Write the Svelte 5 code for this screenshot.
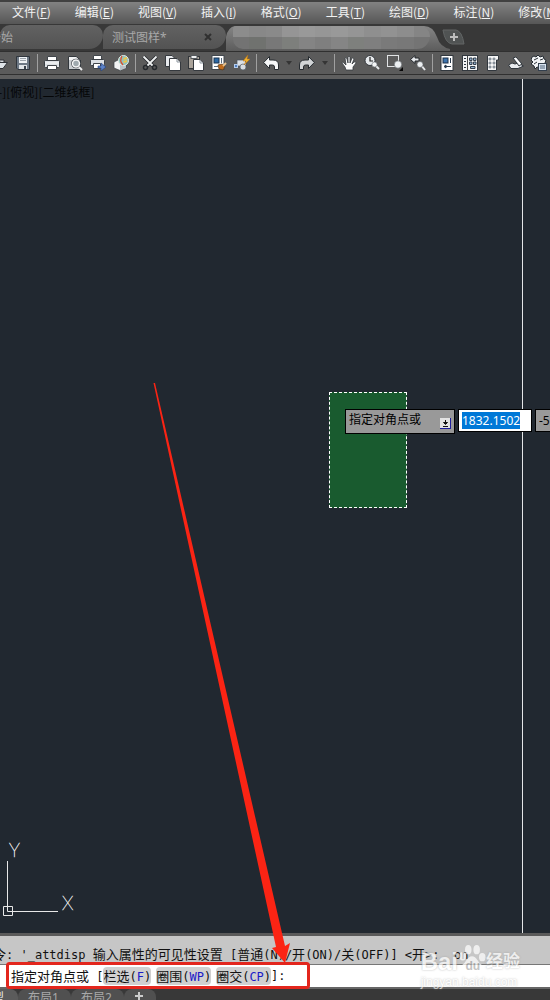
<script>
  import { onMount } from 'svelte';

  let menus = [
    ['文件', 'F'], ['编辑', 'E'], ['视图', 'V'], ['插入', 'I'], ['格式', 'O'],
    ['工具', 'T'], ['绘图', 'D'], ['标注', 'N'], ['修改', 'M']
  ];

  let tools = [
    'open', 'save', '|', 'print', 'preview', 'publish', 'globe', '|',
    'cut', 'copy', 'paste', 'match', 'block', '|',
    'undo', 'v', 'redo', 'v', '|',
    'pan', 'zoomrt', 'zoomwin', 'zoomprev', '|',
    'props', 'center', 'palette', 'sheet', 'markup'
  ];

  let historyText = "命令: '_attdisp 输入属性的可见性设置 [普通(N)/开(ON)/关(OFF)] <开>:  on";
  let options = [['栏选', 'F'], ['圈围', 'WP'], ['圈交', 'CP']];

  // mosaic strip over the active tab's file name, two rows of blocks
  let mosaic = [
    '#8c8c8c', '#888888', '#8a8a8a', '#959595', '#999999', '#969696', '#999999', '#959595', '#8f8f8f', '#929292', '#8d8d8d', '#858585',
    '#737373', '#70726f', '#787878', '#7d7f7c', '#848484', '#7f7f7f', '#858585', '#7e807d', '#7f7f7f', '#7a7a7a', '#787878', '#747474'
  ];

  let x = '1832.1502';
  let coord;

  // chinese runs get a slightly bigger font than the mono text
  function runs(text) {
    return text.split(/([\u4e00-\u9fa5]+)/).filter((s) => s);
  }
  function isHan(s) {
    return /[\u4e00-\u9fa5]/.test(s);
  }

  onMount(() => {
    coord.focus();
    coord.select();
  });
</script>

<div class="app">
  <nav class="menubar">
    {#each menus as [name, key]}
      <button>{name}(<u>{key}</u>)</button>
    {/each}
  </nav>

  <div class="tabs">
    <button class="tab first">开始</button>
    <div class="tab second">
      <button class="name">测试图样*</button>
      <button class="close" aria-label="关闭">
        <svg width="8" height="8" viewBox="0 0 8 8"><path d="M1 1L7 7M7 1L1 7" stroke="#303030" stroke-width="2" /></svg>
      </button>
    </div>
    <div class="tab active">
      <svg class="shape" width="224" height="26" viewBox="0 0 224 26">
        <defs>
          <linearGradient id="tabfill" x1="0" y1="0" x2="0" y2="1">
            <stop offset="0" stop-color="#858585" />
            <stop offset="1" stop-color="#5c5c5c" />
          </linearGradient>
        </defs>
        <path d="M0 26V12Q2 2 9 1H198Q207 1 211 12Q214 22 224 24V26Z" fill="url(#tabfill)" />
      </svg>
      <div class="mosaic">
        {#each mosaic as c}<i style="background: {c}"></i>{/each}
      </div>
    </div>
    <button class="add" aria-label="新建">
      <svg width="24" height="16" viewBox="0 0 24 16">
        <path d="M1 1H14Q20 2 22 15H10Q3 14 1 1Z" fill="#505353" stroke="#626565" />
        <path d="M12 4V12M8 8H16" stroke="#bdbdbd" stroke-width="2" />
      </svg>
    </button>
  </div>

  <div class="toolbar">
    {#each tools as t}
      {#if t === '|'}
        <span class="sep"></span>
      {:else if t === 'v'}
        <button class="drop" aria-label="more"><svg width="6" height="4" viewBox="0 0 6 4"><path d="M0 0H6L3 4Z" fill="#353535" /></svg></button>
      {:else}
        <button class="tool" aria-label={t}>
          <svg width="16" height="16" viewBox="0 0 16 16">
            {#if t === 'open'}
              <path d="M4 5H12V8" fill="#d6dade" stroke="#303338" />
              <path d="M4 7.500H15.500L11 13.500H1Z" fill="#dfe4e8" stroke="#303338" />
            {:else if t === 'save'}
              <path d="M1.500 1.500H14.500V14.500H3L1.500 13Z" fill="#6d7885" stroke="#30363d" />
              <rect x="4" y="2" width="8" height="6" fill="#eef1f4" />
              <path d="M5 3.500H11M5 5.500H11" stroke="#9aa2aa" />
              <rect x="4" y="10" width="8" height="4" fill="#dfe3e7" />
              <rect x="9" y="11" width="2" height="3" fill="#39424c" />
            {:else if t === 'print'}
              <path d="M3.500 1.500H12.500V6H3.500Z" fill="#fff" stroke="#41464b" />
              <rect x="0.500" y="5.500" width="15" height="7" rx="1" fill="#dde1e5" stroke="#3b4045" />
              <path d="M3.500 10.500H12.500V14.500H3.500Z" fill="#fff" stroke="#41464b" />
              <path d="M1 8H15" stroke="#f8f9fa" />
            {:else if t === 'preview'}
              <path d="M1.500 1.500H9L13.500 5V14.500H1.500Z" fill="#c9cdd0" stroke="#33383d" />
              <path d="M2 2H9L12 5H2Z" fill="#f3f4f5" />
              <circle cx="9" cy="8.500" r="4.800" fill="#33383d" />
              <circle cx="9" cy="8.500" r="3.500" fill="#9fa9ae" stroke="#f6f7f8" stroke-width="1.500" />
              <path d="M12 12L15 15" stroke="#eceeef" stroke-width="2" />
            {:else if t === 'publish'}
              <path d="M3.500 0.500H11.500V5H3.500Z" fill="#fff" stroke="#41464b" />
              <rect x="0.500" y="4.500" width="14" height="6" rx="1" fill="#dde1e5" stroke="#3b4045" />
              <path d="M3.500 8.500H10.500V13.500H3.500Z" fill="#fff" stroke="#41464b" />
              <path d="M8 11H11V8L16 12L11 16V13H8Z" fill="#5b82c8" stroke="#25407a" stroke-width="0.600" />
            {:else if t === 'globe'}
              <path d="M1 7L7 4L13 8V13L7 15.500L1 13Z" fill="#f2f4f5" stroke="#3b4045" stroke-width="0.700" />
              <path d="M7 10L13 8V13L7 15.500Z" fill="#b9c1c7" />
              <circle cx="10.500" cy="5.500" r="5" fill="#90c3bd" stroke="#e4ebe5" />
              <path d="M9 1Q6 6 10 10" fill="none" stroke="#d94d31" stroke-width="1.300" />
              <path d="M10.500 4L14 3M10.500 7L14 6" stroke="#edc64b" stroke-width="2" />
            {:else if t === 'cut'}
              <path d="M1.500 1.500L11 11M14.500 1.500L5 11" stroke="#262a2e" stroke-width="3.500" />
              <path d="M1.500 1.500L11 11M14.500 1.500L5 11" stroke="#eef0f1" stroke-width="1.800" />
              <circle cx="3.500" cy="12.500" r="2" fill="none" stroke="#25292d" stroke-width="1.500" />
              <circle cx="12.500" cy="12.500" r="2" fill="none" stroke="#25292d" stroke-width="1.500" />
            {:else if t === 'copy'}
              <path d="M0.500 0.500H7L9.500 3V11.500H0.500Z" fill="#e7e9ec" stroke="#35393e" />
              <path d="M4.500 3.500H12L15.500 7V15.500H4.500Z" fill="#fff" stroke="#35393e" />
              <path d="M12 4V7H15" fill="none" stroke="#8b949d" />
            {:else if t === 'paste'}
              <rect x="0.500" y="1.500" width="11" height="12" fill="#aaa39a" stroke="#33373b" />
              <rect x="3" y="0.500" width="6" height="3" fill="#f0f1f2" stroke="#54585c" />
              <path d="M5.500 4.500H12L15.500 8V15.500H5.500Z" fill="#fff" stroke="#35393e" />
              <path d="M12 5V8H15" fill="none" stroke="#8b949d" />
            {:else if t === 'match'}
              <rect x="1" y="0.500" width="12" height="14" fill="#fff" stroke="#43494f" />
              <rect x="3" y="3" width="5" height="5" fill="#2b68a5" stroke="#1d354e" />
              <path d="M10.500 3V8M3 11.500H7" stroke="#586d80" />
              <path d="M7 10L11 9L14 11L12 15L8 14Z" fill="#c06b1b" stroke="#593918" stroke-width="0.700" />
              <path d="M12 11L15 8" stroke="#e8c08a" stroke-width="2" />
            {:else if t === 'block'}
              <path d="M3 5H10L12 7V11H3Z" fill="#dce1e6" stroke="#4b535c" stroke-width="0.700" />
              <circle cx="9" cy="12" r="3" fill="#d8dde2" stroke="#555d65" stroke-width="0.700" />
              <rect x="0.500" y="9.500" width="3" height="3" fill="#4f7fc0" stroke="#b4cbea" />
              <path d="M14 0L9 6H12L10 10L16 4H13Z" fill="#f2b42d" stroke="#b66e16" stroke-width="0.500" />
            {:else if t === 'undo' || t === 'redo'}
              <g transform={t === 'redo' ? 'translate(16 0) scale(-1 1)' : ''}>
                <path d="M0.700 7.500L6.500 1.500V5H10Q15.500 5 15.500 10V14.500H11.500V12Q11.500 10 9.500 10H6.500V13.500Z" fill={t === 'undo' ? '#f7f8f9' : '#d2d5d7'} stroke="#272c31" />
              </g>
            {:else if t === 'pan'}
              <path d="M5 15L4 12L1 8Q1 6 3 8L5 10L4 3Q5 1 6 4L7 8V2Q8 0 9 2V8L11 3Q12 2 13 4L11 9L13 7Q15 6 15 8L12 12V15Z" fill="#fafafa" stroke="#363b40" stroke-width="0.800" />
            {:else if t === 'zoomrt'}
              <circle cx="6" cy="5.500" r="5" fill="#e7eaed" stroke="#34383d" />
              <path d="M6 2V6H9" fill="none" stroke="#222" stroke-width="1.200" />
              <path d="M11 10L15 14" stroke="#e7e9eb" stroke-width="2" />
              <circle cx="10.500" cy="9.500" r="2.500" fill="#f4f5f6" stroke="#6f757b" stroke-width="0.600" />
            {:else if t === 'zoomwin'}
              <rect x="0.500" y="0.500" width="11" height="11" fill="#5b5b5b" stroke="#e1e3e5" />
              <circle cx="11" cy="9.500" r="3.700" fill="#edf0f2" stroke="#555b60" stroke-width="0.600" />
              <path d="M16 12V16H12Z" fill="#080808" />
            {:else if t === 'zoomprev'}
              <path d="M0.500 4.500L5 0.500V3H9V6H5V8.500Z" fill="#e5e8eb" stroke="#24282d" />
              <path d="M11 10L15 15" stroke="#e7e9eb" stroke-width="2" />
              <circle cx="10" cy="9.500" r="3" fill="#edf0f2" stroke="#555b60" stroke-width="0.600" />
            {:else if t === 'props'}
              <rect x="2" y="0.500" width="12" height="15" fill="#fff" stroke="#32383e" />
              <rect x="4" y="3" width="5" height="5" fill="#3d73ad" stroke="#1f3146" />
              <path d="M11.500 3V8M6 11.500H12M5 11.500L7 10V13Z" stroke="#28394b" fill="#28394b" />
            {:else if t === 'center'}
              <rect x="0.500" y="0.500" width="15" height="15" fill="#f3f4f5" stroke="#32383e" />
              <path d="M5.500 1V15" stroke="#444" />
              <path d="M2 3.500H4M2 6.500H4M2 9.500H4M2 12.500H4" stroke="#2d3742" />
              <path d="M7.500 3H10V5.500H7.500ZM11.500 3H14V5.500H11.500ZM7.500 7H10V9.500H7.500ZM11.500 7H14V9.500H11.500ZM8.500 11.500H13V13.500H8.500Z" fill="#91afce" stroke="#34404d" />
            {:else if t === 'palette'}
              <path d="M2.500 0.500H13.500V5H11.500V15.500H2.500Z" fill="#f5f5f6" stroke="#32383e" />
              <path d="M4 3H6V5H4ZM8 3H10V5H8ZM4 7H6V9H4ZM8 7H10V9H8ZM4 11H6V13H4ZM8 11H10V13H8Z" fill="#a4adb6" stroke="#717b84" stroke-width="0.600" />
            {:else if t === 'sheet'}
              <path d="M0.500 10L4 8L7 9L10 8L15.500 11L10 13.500H3Z" fill="#e9ecef" stroke="#31373d" />
              <path d="M5 3L8 2L14 9L11 11Z" fill="#d9dde1" stroke="#31373d" />
              <path d="M7 3L12 9" stroke="#fff" stroke-width="1.500" />
            {:else}
              <path d="M1 2L3 1L5 2L7 0L9 2L12 1L13 4L15 5L14 8L15 10L12 12L9 13L6 12L4 14L3 11L0 9L2 7L0 5Z" fill="#f0f2f4" stroke="#262c33" />
              <path d="M3 5L7 3M9 5L12 4M3 9L6 7" stroke="#2a3036" />
              <rect x="7.500" y="8.500" width="8" height="7" fill="#d8e3ef" stroke="#333f4d" />
              <path d="M9 11H14M9 13H14" stroke="#52657a" />
            {/if}
          </svg>
        </button>
      {/if}
    {/each}
  </div>

  <main class="canvas">
    <p class="view">[-][俯视][二维线框]</p>
    <div class="guide"></div>
    <div class="pick"></div>
    <div class="dyn">
      <label class="prompt" for="coord">指定对角点或
        <svg width="11" height="11" viewBox="0 0 11 11">
          <rect width="11" height="11" fill="#1c1c9c" />
          <rect width="10" height="10" fill="#e3e3e3" />
          <path d="M5.500 2V5M3.500 4.500H7.500L5.500 6.500ZM3 8.500H8" fill="#111" stroke="#111" />
        </svg>
      </label>
      <input id="coord" bind:value={x} bind:this={coord} />
      <input class="second" value="-519.6423" aria-label="Y" />
    </div>
    <svg class="ucs" width="80" height="94" viewBox="0 0 80 94">
      <path d="M7.500 22V72.500H58M3.500 67.500H12.500V76.500H3.500Z" fill="none" stroke="#e8e8e8" />
      <text x="9" y="18">Y</text>
      <text x="62" y="71">X</text>
    </svg>
  </main>

  <div class="command">
    <p class="history">{#each runs(historyText) as s}<span class:han={isHan(s)}>{s}</span>{/each}</p>
    <div class="line">
      <span><span class="han">指定对角点或</span>&nbsp;[</span>
      <div class="options">
        {#each options as [name, key]}
          <button><span class="han">{name}</span>(<b>{key}</b>)</button>
        {/each}
      </div>
      <span>]:</span>
    </div>
  </div>

  <div class="layouts">
    <button class="model">模型</button>
    <button>布局1</button>
    <button>布局2</button>
    <button class="plus" aria-label="新建布局">
      <svg width="10" height="10" viewBox="0 0 10 10"><path d="M5 1V9M1 5H9" stroke="#ccc" stroke-width="2" /></svg>
    </button>
  </div>

  <svg class="marks" width="320" height="630" viewBox="0 0 320 630">
    <path d="M153.500 13L155 13L285 576L290 573L285 593L272 578L276 577Z" fill="#fb2414" />
    <rect x="7.500" y="593.500" width="301" height="24" rx="2" fill="none" stroke="#e3261d" stroke-width="3" />
  </svg>

  <div class="watermark">
    <div class="brand">
      <span>Bai</span>
      <svg width="28" height="32" viewBox="0 0 30 32">
        <ellipse cx="5" cy="13" rx="3.500" ry="4.500" />
        <ellipse cx="11" cy="6" rx="3.500" ry="5" />
        <ellipse cx="20" cy="6" rx="3.500" ry="5" />
        <ellipse cx="26" cy="14" rx="3.500" ry="4.500" />
        <path d="M15 13C20 13 21 19 25 22C29 26 26 31 21 31C17 31 13 30 9 31C4 31 1 27 5 22C9 19 10 13 15 13Z" />
        <text x="8" y="28">du</text>
      </svg>
      <span class="cn">经验</span>
    </div>
    <div class="url">jingyan.baidu.com</div>
  </div>
</div>

<style>
  :global(body) {
    margin: 0;
    background: #212830;
  }
  .app {
    position: relative;
    display: flex;
    flex-direction: column;
    height: 100vh;
    overflow: hidden;
    font-family: "Noto Sans", "Noto Sans CJK SC", sans-serif;
    font-size: 12px;
  }
  button {
    padding: 0;
    border: none;
    background: none;
    color: inherit;
    font: inherit;
    white-space: nowrap;
  }
  p {
    margin: 0;
  }
  svg {
    display: block;
  }
  .menubar {
    display: flex;
    flex: none;
    gap: 24px;
    height: 22px;
    padding-left: 12px;
    border-top: 2px solid #414141;
    background: linear-gradient(#828282, #565656);
    color: #f2f2f2;
    line-height: 20px;
  }
  .menubar button {
    height: 20px;
    font-family: "Noto Sans CJK SC", sans-serif;
  }
  .tabs {
    display: flex;
    flex: none;
    height: 27px;
    background: #383838;
    color: #a8a8a8;
  }
  .tab {
    display: flex;
    align-items: center;
    box-sizing: border-box;
    height: 24px;
    margin-top: 1px;
    border-radius: 10px 10px 14px 0;
    background: linear-gradient(#626262, #535353);
  }
  .first {
    width: 103px;
    padding-left: 1px;
    text-indent: -12px;
  }
  .second {
    justify-content: space-between;
    width: 123px;
    padding: 0 14px 0 9px;
  }
  .active {
    display: grid;
    width: 216px;
    height: 26px;
    background: none;
  }
  .shape, .mosaic {
    grid-area: 1 / 1;
  }
  .mosaic {
    display: grid;
    grid-template-columns: repeat(12, 1fr);
    height: 23px;
    margin: 0 20px 2px 7px;
    border-radius: 4px 12px 16px 12px;
    overflow: hidden;
    z-index: 1;
  }
  .add {
    align-self: flex-start;
    margin-top: 5px;
    z-index: 1;
  }
  .toolbar {
    display: flex;
    flex: none;
    align-items: center;
    gap: 7px;
    height: 22px;
    margin-left: -8px;
    border-top: 1px solid #303030;
    border-bottom: 1px solid #303030;
    background: #5b5b5b;
    box-shadow: 0 4px #5f5f5f;
    z-index: 1;
  }
  .tool, .drop, .sep {
    flex: none;
  }
  .sep {
    width: 1px;
    height: 18px;
    margin: 0 -1px;
    background: #a0a0a0;
  }
  .canvas {
    position: relative;
    flex: 1;
    min-height: 0;
    margin-top: 4px;
    overflow: hidden;
    background: #212830;
  }
  .view {
    margin: 4px 0 0 -6px;
    color: #050607;
    font-family: "Noto Sans CJK SC", sans-serif;
    line-height: 18px;
  }
  .guide {
    position: absolute;
    top: 0;
    bottom: 0;
    left: 522px;
    width: 1px;
    background: #e4e6e8;
  }
  .pick {
    position: absolute;
    top: 313px;
    left: 329px;
    width: 76px;
    height: 114px;
    border: 1px dashed #fff;
    background: #195b2f;
  }
  .dyn {
    position: absolute;
    top: 330px;
    left: 345px;
    display: flex;
    align-items: flex-start;
    gap: 3px;
  }
  .dyn .prompt {
    display: flex;
    justify-content: space-between;
    box-sizing: border-box;
    width: 110px;
    height: 25px;
    padding: 0 3px;
    border: 1px solid #000;
    background: #999;
    color: #000;
    line-height: 20px;
  }
  .prompt svg {
    margin-top: 8px;
  }
  .dyn input {
    box-sizing: border-box;
    width: 74px;
    height: 23px;
    padding: 0 3px;
    border: 1px solid #000;
    border-radius: 0;
    outline: none;
    background: #fff;
    color: #000;
    font: inherit;
  }
  .dyn input::selection {
    background: #0078d7;
    color: #fff;
  }
  .dyn .second {
    background: #999;
  }
  .ucs {
    position: absolute;
    left: 0;
    bottom: 0;
  }
  .ucs text {
    fill: #fff;
    stroke: #e8e8e8;
    stroke-width: 0.5px;
    font-family: Lato, sans-serif;
    font-weight: 100;
    font-size: 19px;
  }
  .command {
    flex: none;
    border-top: 3px solid #5a5a5a;
    font-family: "DejaVu Sans Mono", "Noto Sans CJK SC", monospace;
    color: #111;
  }
  .han {
    font-family: "Noto Sans CJK SC", sans-serif;
    font-size: 13px;
  }
  .history {
    height: 20px;
    padding-top: 8px;
    text-indent: -20px;
    border-bottom: 1px solid #777;
    background: #c6c6c6;
    line-height: 20px;
    white-space: pre;
  }
  .line {
    display: flex;
    align-items: center;
    height: 22px;
    padding-left: 11px;
    border-bottom: 2px solid #666;
    background: #fff;
    line-height: 18px;
    white-space: nowrap;
  }
  .options {
    display: flex;
    gap: 5px;
  }
  .line button {
    height: 18px;
    border-radius: 4px;
    background: #d0d0d0;
    line-height: 18px;
  }
  .line b {
    color: #1a1ac8;
    font-weight: normal;
  }
  .layouts {
    display: flex;
    flex: none;
    height: 11px;
    overflow: hidden;
    background: #383838;
    color: #a8a8a8;
    line-height: 18px;
  }
  .layouts button {
    height: 18px;
    padding: 0 12px 0 10px;
    border-radius: 8px 8px 0 0;
    background: #505050;
  }
  .layouts .model {
    margin-left: -30px;
    padding-right: 14px;
    background: #5b5b5b;
    color: #eee;
  }
  .layouts .plus {
    padding-bottom: 4px;
  }
  .marks {
    position: absolute;
    left: 0;
    bottom: 0;
    z-index: 2;
    pointer-events: none;
  }
  .watermark {
    position: absolute;
    right: 30px;
    bottom: 11px;
    z-index: 2;
    color: #fff;
    opacity: 0.7;
    font-family: "Liberation Sans", "Noto Sans CJK SC", sans-serif;
    text-shadow: 0 0 2px #999;
    pointer-events: none;
  }
  .brand {
    display: flex;
    align-items: flex-end;
    font-size: 24px;
    font-weight: bold;
    line-height: 26px;
  }
  .brand svg {
    fill: #fff;
    overflow: visible;
  }
  .brand text {
    fill: #aaa;
    font-size: 13px;
    text-shadow: none;
  }
  .brand .cn {
    font-size: 17px;
  }
  .url {
    font-size: 12px;
    line-height: 14px;
  }
</style>
